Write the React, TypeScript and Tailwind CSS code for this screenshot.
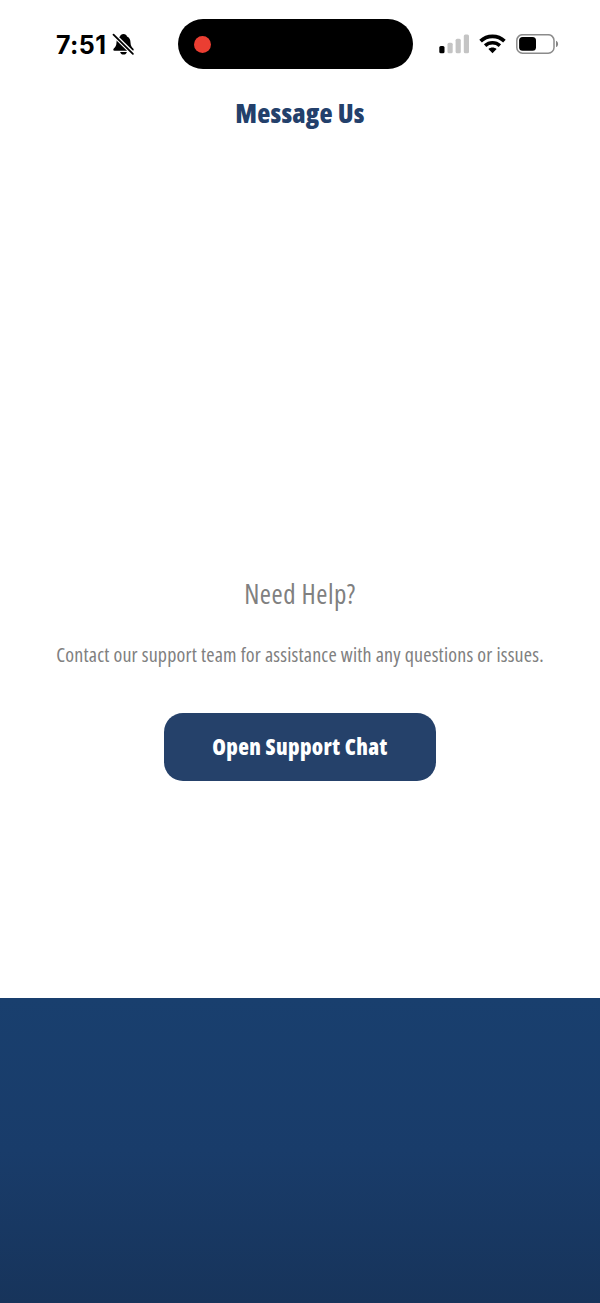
import React from 'react';

const BellOffIcon: React.FC = () => (
  <svg className="ml-[6px] mt-px" width="23" height="23" viewBox="0 0 23 23" fill="none">
    <path
      d="M11.500 1c-1.900 0-3.200 1.100-3.500 2.400C5.300 4.500 4.600 6.600 4.500 9.500c-.1 3.400-1.300 4.700-2.700 6-.8.8-.7 2.300.7 2.300h18c1.400 0 1.500-1.500.700-2.300-1.400-1.300-2.600-2.600-2.700-6-.1-2.900-.8-5-3.500-6.100C14.700 2.100 13.400 1 11.500 1Z"
      fill="black"
    />
    <path d="M8.100 19h6.800c-.4 1.700-1.700 2.600-3.400 2.600s-3-.9-3.400-2.600Z" fill="black" />
    <path d="M1.500 1.600 21.500 21.300" stroke="white" strokeWidth="4.200" />
    <path d="M1.500 1.700 20.900 20.900" stroke="black" strokeWidth="1.800" strokeLinecap="round" />
  </svg>
);

const SignalIcon: React.FC = () => (
  <svg width="30" height="20" viewBox="0 0 30 20">
    <rect x="0.300" y="12" width="5.200" height="7.200" rx="1.500" fill="black" />
    <rect x="8.500" y="8.700" width="5.200" height="10.500" rx="1.500" fill="#c4c4c4" />
    <rect x="16.600" y="4.800" width="5.200" height="14.400" rx="1.500" fill="#c4c4c4" />
    <rect x="24.800" y="0.400" width="5.200" height="18.800" rx="1.500" fill="#c4c4c4" />
  </svg>
);

const WifiIcon: React.FC = () => (
  <svg className="ml-[10px]" width="27" height="20" viewBox="0 0 27 20" fill="none">
    <path d="M1.600 7.100C8.200.7 18.800.7 25.400 7.100" stroke="black" strokeWidth="3.700" />
    <path d="M6.100 11.600c4.200-3.900 10.600-3.900 14.800 0" stroke="black" strokeWidth="3.500" />
    <path d="M9.400 15.100c2.300-2 5.900-2 8.200 0l-4.100 4.100-4.100-4.100Z" fill="black" />
  </svg>
);

const BatteryIcon: React.FC = () => (
  <svg className="ml-[10px]" width="43" height="20" viewBox="0 0 43 20">
    <rect x="0.800" y="0.700" width="37.200" height="18.500" rx="5.800" fill="none" stroke="#8b8b8b" strokeWidth="1.500" />
    <rect x="3.100" y="3" width="16.900" height="13.700" rx="3.500" fill="black" />
    <path d="M40 6.700c1.300.5 2.100 1.700 2.100 3.200s-.8 2.700-2.100 3.200V6.700Z" fill="#858585" />
  </svg>
);

const StatusBar: React.FC = () => (
  <header className="flex h-[69px] pt-[19px]">
    <div className="flex h-[50px] w-[178px] items-center pl-[56px]">
      <span className="mt-[2px] font-['Inter'] text-[25px] font-bold leading-none tracking-[0.4px] text-black">7:51</span>
      <BellOffIcon />
    </div>
    <div className="flex h-[50px] w-[235px] items-center rounded-full bg-black pl-[16px]">
      <span className="h-[17px] w-[17px] rounded-full bg-[#eb3e32]" />
    </div>
    <div className="flex h-[50px] items-center pl-[26px]">
      <SignalIcon />
      <WifiIcon />
      <BatteryIcon />
    </div>
  </header>
);

const App: React.FC = () => {
  return (
    <div className="flex h-[1303px] w-[600px] flex-col overflow-hidden bg-white font-['Open_Sans',sans-serif] [font-stretch:75%]">
      <StatusBar />

      <h1 className="mt-[26px] flex h-9 items-center justify-center whitespace-nowrap text-[27px] font-extrabold tracking-[0.2px] text-[#23406b]">
        Message Us
      </h1>

      <main className="flex flex-1 flex-col items-center pt-[445px]">
        <h2 className="flex h-9 items-center whitespace-nowrap text-[27px] font-normal tracking-[0.5px] text-[#808080]">
          Need Help?
        </h2>
        <p className="mt-[29px] flex h-7 items-center justify-center whitespace-nowrap text-[20px] font-normal tracking-[0.2px] text-[#808080]">
          Contact our support team for assistance with any questions or issues.
        </p>
        <button
          type="button"
          className="mt-[44px] flex h-[68px] w-[272px] items-center justify-center whitespace-nowrap rounded-[19px] bg-[#25416a] pb-[2px] text-[22px] font-extrabold tracking-[0.4px] text-white"
        >
          Open Support Chat
        </button>
      </main>

      <footer className="h-[305px] shrink-0 bg-linear-to-b from-[#193f6e] via-[#193c6a] to-[#17345b]" />
    </div>
  );
};

export default App;
